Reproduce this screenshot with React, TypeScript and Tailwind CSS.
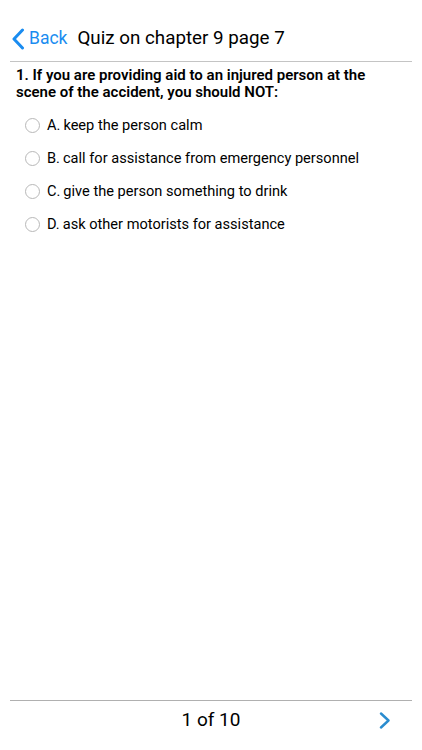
import React from 'react';

const options = [
    { letter: 'A.', text: 'keep the person calm' },
    { letter: 'B.', text: 'call for assistance from emergency personnel' },
    { letter: 'C.', text: 'give the person something to drink' },
    { letter: 'D.', text: 'ask other motorists for assistance' },
];

export default function App() {
    return (
        <div
            className="w-[422px] h-[750px] bg-white flex flex-col text-black"
            style={{ fontFamily: 'Roboto, "Liberation Sans", sans-serif' }}
        >
            {/* Header */}
            <div className="h-[61px] flex items-center pt-[16px] pl-[11px]">
                <svg width="14" height="22" viewBox="0 0 14 22" fill="none">
                    <path d="M11.5 2 L3 11 L11.5 20" stroke="#1a8cf0" strokeWidth="3" strokeLinecap="round" strokeLinejoin="round" />
                </svg>
                <span className="ml-[4px] text-[17.5px] leading-none text-[#1a8cf0]">Back</span>
                <span className="ml-[10px] text-[18.8px] leading-none">Quiz on chapter 9 page 7</span>
            </div>
            <div className="mx-[10px] h-px bg-[#c4c4c4]" />

            {/* Question */}
            <div className="px-[16px] pt-[5px] text-[15px] font-semibold leading-[17px]">
                1. If you are providing aid to an injured person at the scene of the accident, you should NOT:
            </div>
            <div className="flex flex-col pt-[8px] pl-[25px]">
                {options.map(o => (
                    <div key={o.letter} className="h-[33px] flex items-center">
                        <div className="w-[15px] h-[15px] rounded-full border border-[#b8b8b8] bg-white" />
                        <span className="ml-[7px] text-[14.6px]">{o.letter}</span>
                        <span className="ml-[3px] text-[14.6px]">{o.text}</span>
                    </div>
                ))}
            </div>

            <div className="flex-1" />

            {/* Footer */}
            <div className="mx-[10px] h-px bg-[#b0b0b0]" />
            <div className="h-[38px] flex items-center relative">
                <div className="flex-1 text-center text-[19px]">1 of 10</div>
                <svg className="absolute right-[31px] top-[11px]" width="12" height="17" viewBox="0 0 12 17" fill="none">
                    <path d="M2 1.5 L9.5 8.5 L2 15.5" stroke="#2a8ccf" strokeWidth="2.4" strokeLinecap="round" strokeLinejoin="round" />
                </svg>
            </div>
            <div className="h-[11px]" />
        </div>
    );
}
